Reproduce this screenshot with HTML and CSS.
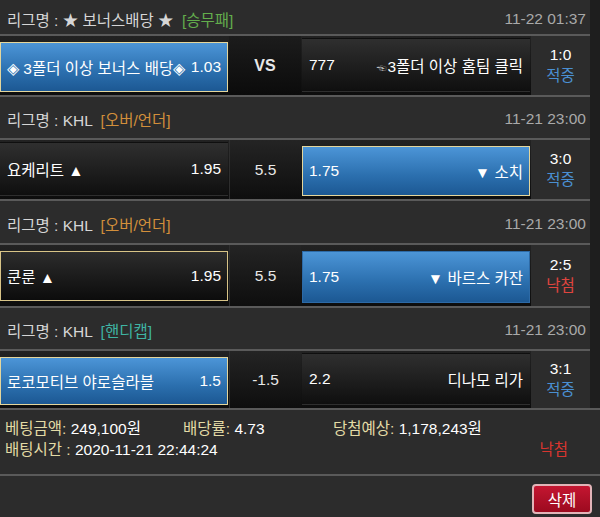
FILE: index.html
```html
<!DOCTYPE html>
<html>
<head>
	<meta charset="utf-8">
	<title>배팅내역</title>
	<link rel="stylesheet" href="styles.css">
</head>
<body>
	<div class="slip">
		<div class="slip__list">
			<div class="league league_first">
				<span class="league__name">리그명 : ★ 보너스배당 ★ <em class="tag tag_green">[승무패]</em></span>
				<span class="league__date">11-22 01:37</span>
			</div>
			<div class="game">
				<div class="odd odd_blue">
					<span>◈ 3폴더 이상 보너스 배당◈</span><span>1.03</span>
				</div>
				<div class="game__mid game__mid_vs">VS</div>
				<div class="odd">
					<span>777</span><span><small class="hand">☜</small>3폴더 이상 홈팀 클릭</span>
				</div>
				<div class="result">1:0<span class="result_win">적중</span></div>
			</div>

			<div class="league">
				<span class="league__name">리그명 : KHL <em class="tag tag_orange">[오버/언더]</em></span>
				<span class="league__date">11-21 23:00</span>
			</div>
			<div class="game">
				<div class="odd">
					<span>요케리트 ▲</span><span>1.95</span>
				</div>
				<div class="game__mid">5.5</div>
				<div class="odd odd_blue">
					<span>1.75</span><span>▼ 소치</span>
				</div>
				<div class="result">3:0<span class="result_win">적중</span></div>
			</div>

			<div class="league league_tall">
				<span class="league__name">리그명 : KHL <em class="tag tag_orange">[오버/언더]</em></span>
				<span class="league__date">11-21 23:00</span>
			</div>
			<div class="game game_tall">
				<div class="odd odd_gold">
					<span>쿤룬 ▲</span><span>1.95</span>
				</div>
				<div class="game__mid">5.5</div>
				<div class="odd odd_blue odd_plain">
					<span>1.75</span><span>▼ 바르스 카잔</span>
				</div>
				<div class="result">2:5<span class="result_lose">낙첨</span></div>
			</div>

			<div class="league">
				<span class="league__name">리그명 : KHL <em class="tag tag_teal">[핸디캡]</em></span>
				<span class="league__date">11-21 23:00</span>
			</div>
			<div class="game game_last">
				<div class="odd odd_blue">
					<span>로코모티브 야로슬라블</span><span>1.5</span>
				</div>
				<div class="game__mid">-1.5</div>
				<div class="odd">
					<span>2.2</span><span>디나모 리가</span>
				</div>
				<div class="result">3:1<span class="result_win">적중</span></div>
			</div>
		</div>
	</div>

	<div class="summary">
		<div class="summary__row">
			<span class="summary__cell summary__cell_amount"><b>베팅금액:</b> 249,100원</span>
			<span class="summary__cell summary__cell_rate"><b>배당률:</b> 4.73</span>
			<span class="summary__cell"><b>당첨예상:</b> 1,178,243원</span>
		</div>
		<div class="summary__row">
			<span class="summary__cell"><b>배팅시간 :</b> 2020-11-21 22:44:24</span>
			<span class="summary__status">낙첨</span>
		</div>
	</div>

	<div class="actions">
		<button class="btn-del" type="button">삭제</button>
	</div>
</body>
</html>
```

FILE: styles.css
```css
body {
	margin: 0;
	background-color: #2c2c2c;
	color: #fff;
	font-size: 15.5px;
	font-family: "Liberation Sans", "Noto Sans CJK KR", sans-serif;
}


.slip {
	background-color: #1e1e1e;
}
	.slip__list {
		width: 590px;
	}


.league {
	height: 41px;
	box-sizing: border-box;
	display: flex;
	align-items: center;
	justify-content: space-between;
	padding: 3px 4px 0 7px;
	background-color: #2c2c2c;
	border-bottom: 2px solid #5a5a5a;
	color: #d6d6d6;
}
	.league { height: 43px; }
	.league_first { height: 36px; }
	.league_tall { height: 44px; }

	.league__date {
		color: #a9a9a9;
	}

	.tag {
		font-style: normal;
		margin-left: 4px;
	}
		.tag_green { color: #63ad4c; }
		.tag_orange { color: #d28f3b; }
		.tag_teal { color: #3fb4a3; }


.game {
	height: 59px;
	display: grid;
	grid-template-columns: 229px 72px 230px 59px;
	background: linear-gradient(#222, #0d0d0d);
	border-bottom: 2px solid #5a5a5a;
}
	.game_tall { height: 61px; }
	.game_last { height: 57px; border-bottom: 0; }

	.odd {
		display: flex;
		align-items: center;
		justify-content: space-between;
		margin: 2px 1px 3px 0;
		padding: 0 6px 0 6px;
		border: 1px solid transparent;
		background: linear-gradient(#2f2f2f, #0f0f0f);
	}
	.game__mid + .odd {
		margin-left: 1px;
	}
		.odd_blue {
			margin-top: 6px;
			margin-bottom: 3px;
			border-color: #e4d69c;
			background: linear-gradient(#4c95d7, #2b6fae 60%, #1c5893);
		}
		.odd_plain {
			border-color: #2d6aa6;
		}
		.odd_gold {
			margin-top: 6px;
			margin-bottom: 5px;
			border-color: #d8c487;
			background: linear-gradient(#2c2c2c, #0c0c0c);
		}

	.hand {
		font-size: 10px;
		color: #bbb;
		margin-right: 1px;
	}

	.game__mid {
		display: flex;
		align-items: center;
		justify-content: center;
		border-left: 1px solid #2e2e2e;
		background: linear-gradient(#242424, #0e0e0e);
		color: #e8e8e8;
	}
		.game__mid_vs {
			border-left: 0;
			background: linear-gradient(#1c1c1c, #0b0b0b);
			font-weight: bold;
			font-size: 16px;
		}

	.result {
		display: flex;
		flex-direction: column;
		align-items: center;
		justify-content: center;
		gap: 1px;
		background-color: #2c2c2c;
		line-height: 20px;
	}
		.result_win { color: #4a8fd1; }
		.result_lose { color: #e0453f; }


.summary {
	padding: 8px 5px 14px;
	border-top: 2px solid #5a5a5a;
	border-bottom: 2px solid #5a5a5a;
	line-height: 21px;
}
	.summary__row {
		display: flex;
		align-items: center;
	}
	.summary__cell b {
		font-weight: normal;
		color: #e3dba6;
	}
		.summary__cell_amount { width: 178px; }
		.summary__cell_rate { width: 150px; }

	.summary__status {
		margin-left: auto;
		margin-right: 27px;
		color: #d8352f;
	}


.actions {
	display: flex;
	justify-content: flex-end;
	padding: 8px 8px 4px;
}
	.btn-del {
		width: 60px;
		height: 30px;
		border: 2px solid #e2b4b8;
		border-radius: 4px;
		background: linear-gradient(#c41631, #9c0a1f);
		color: #fff;
		font-size: 15.5px;
		font-family: "Liberation Sans", "Noto Sans CJK KR", sans-serif;
	}
```
